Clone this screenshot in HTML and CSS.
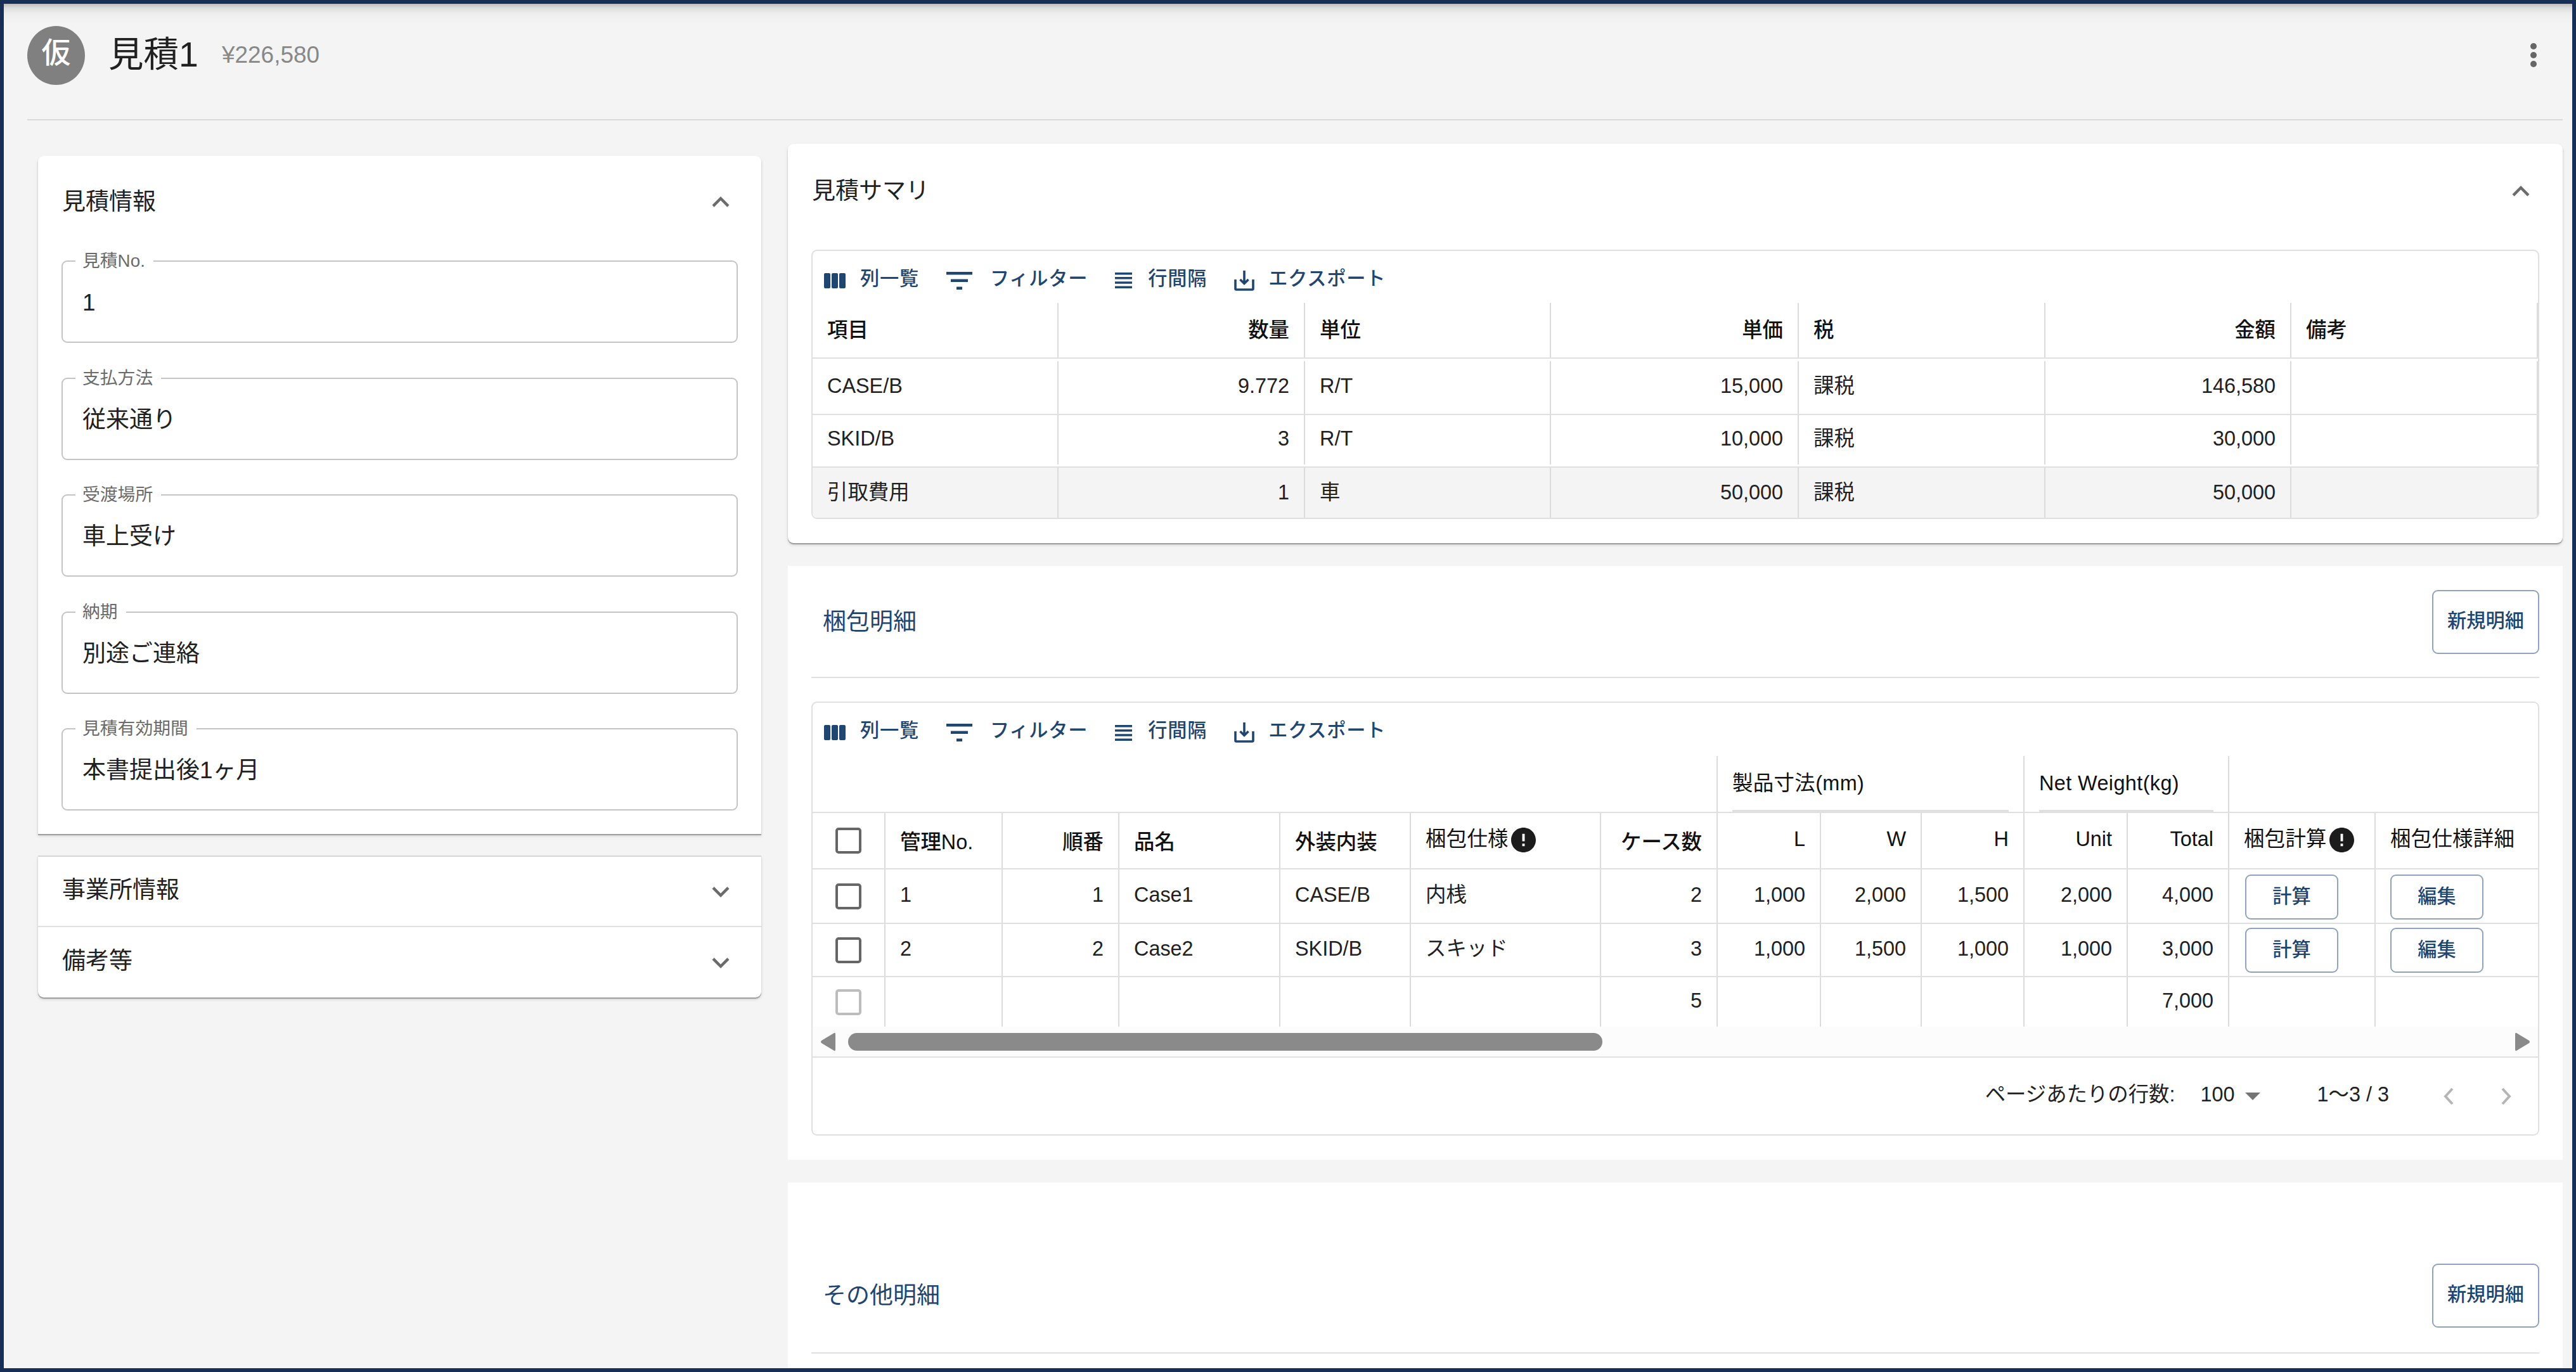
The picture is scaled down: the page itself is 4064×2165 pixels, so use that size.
FILE: index.html
```html
<!DOCTYPE html>
<html lang="ja">
<head>
    <meta charset="UTF-8">
    <meta name="viewport" content="width=device-width, initial-scale=1.0">
    <title>見積1</title>
    <link rel="stylesheet" href="styles.css">
</head>
<body>
    <!-- shared icons -->
    <svg class="defs" width="0" height="0">
        <symbol id="chevron" viewBox="0 0 24 24"><path d="M16.59 8.59 12 13.17 7.41 8.59 6 10l6 6 6-6z"/></symbol>
        <symbol id="columns" viewBox="0 0 34 24"><path d="M2 0h6a2 2 0 0 1 2 2v20a2 2 0 0 1-2 2H2a2 2 0 0 1-2-2V2a2 2 0 0 1 2-2zM14 0h6a2 2 0 0 1 2 2v20a2 2 0 0 1-2 2h-6a2 2 0 0 1-2-2V2a2 2 0 0 1 2-2zM26 0h6a2 2 0 0 1 2 2v20a2 2 0 0 1-2 2h-6a2 2 0 0 1-2-2V2a2 2 0 0 1 2-2z"/></symbol>
        <symbol id="filter" viewBox="0 0 41 28"><path d="M0 0h41v4.5H0zM7 11.5h27V16H7zM16 23.5h9V28h-9z"/></symbol>
        <symbol id="density" viewBox="0 0 27 25"><path d="M0 0h27v3.500H0zM0 7.100h27v3.500H0zM0 14.200h27v3.500H0zM0 21.500h27V25H0z"/></symbol>
        <symbol id="export" viewBox="0 0 32 32"><path d="M30 14v14.500a1.500 1.500 0 0 1-1.500 1.500h-25A1.500 1.500 0 0 1 2 28.500V14M16 0v20M9.500 14l6.500 6.500 6.500-6.500" fill="none" stroke="currentColor" stroke-width="3.600"/></symbol>
        <symbol id="info" viewBox="2 2 20 20"><path d="M12 2C6.480 2 2 6.480 2 12s4.480 10 10 10 10-4.480 10-10S17.520 2 12 2zm1 15h-2v-2h2v2zm0-4h-2V7h2v6z"/></symbol>
    </svg>

    <div class="page">
        <header class="header">
            <div class="avatar">仮</div>
            <h1>見積1</h1>
            <span class="price">¥226,580</span>
            <svg class="more" viewBox="0 0 12 38"><circle cx="6" cy="5" r="5"/><circle cx="6" cy="19" r="5"/><circle cx="6" cy="33" r="5"/></svg>
        </header>

        <div class="container">
            <aside class="sidebar">
                <section class="card info-card">
                    <div class="card-title"><span>見積情報</span><svg class="chevron up"><use href="#chevron"/></svg></div>
                    <div class="fields">
                        <div class="field"><label>見積No.</label><span>1</span></div>
                        <div class="field"><label>支払方法</label><span>従来通り</span></div>
                        <div class="field"><label>受渡場所</label><span>車上受け</span></div>
                        <div class="field"><label>納期</label><span>別途ご連絡</span></div>
                        <div class="field"><label>見積有効期間</label><span>本書提出後1ヶ月</span></div>
                    </div>
                </section>
                <section class="card folded">
                    <div class="fold"><span>事業所情報</span><svg class="chevron"><use href="#chevron"/></svg></div>
                    <div class="fold"><span>備考等</span><svg class="chevron"><use href="#chevron"/></svg></div>
                </section>
            </aside>

            <main class="main">
                <section class="card summary">
                    <div class="card-title"><span>見積サマリ</span><svg class="chevron up"><use href="#chevron"/></svg></div>
                    <div class="grid">
                        <div class="toolbar">
                            <a><svg class="i-columns"><use href="#columns"/></svg>列一覧</a>
                            <a><svg class="i-filter"><use href="#filter"/></svg>フィルター</a>
                            <a><svg class="i-density"><use href="#density"/></svg>行間隔</a>
                            <a><svg class="i-export"><use href="#export"/></svg>エクスポート</a>
                        </div>
                        <div class="row head"><div>項目</div><div class="num">数量</div><div>単位</div><div class="num">単価</div><div>税</div><div class="num">金額</div><div>備考</div></div>
                        <div class="row r1"><div>CASE/B</div><div class="num">9.772</div><div>R/T</div><div class="num">15,000</div><div>課税</div><div class="num">146,580</div><div></div></div>
                        <div class="row r2"><div>SKID/B</div><div class="num">3</div><div>R/T</div><div class="num">10,000</div><div>課税</div><div class="num">30,000</div><div></div></div>
                        <div class="row r3 hover"><div>引取費用</div><div class="num">1</div><div>車</div><div class="num">50,000</div><div>課税</div><div class="num">50,000</div><div></div></div>
                    </div>
                </section>

                <section class="panel packing">
                    <div class="panel-head"><h2>梱包明細</h2><button class="btn-new">新規明細</button></div>
                    <div class="grid">
                        <div class="toolbar">
                            <a><svg class="i-columns"><use href="#columns"/></svg>列一覧</a>
                            <a><svg class="i-filter"><use href="#filter"/></svg>フィルター</a>
                            <a><svg class="i-density"><use href="#density"/></svg>行間隔</a>
                            <a><svg class="i-export"><use href="#export"/></svg>エクスポート</a>
                        </div>
                        <div class="group-row">
                            <div></div>
                            <div><span class="group">製品寸法(mm)</span></div>
                            <div><span class="group">Net Weight(kg)</span></div>
                            <div></div>
                        </div>
                        <div class="row head">
                            <div class="check"><i></i></div><div class="low">管理No.</div><div class="num low">順番</div><div class="low">品名</div><div class="low">外装内装</div>
                            <div class="thin">梱包仕様<svg class="i-info"><use href="#info"/></svg></div><div class="num low">ケース数</div>
                            <div class="num">L</div><div class="num">W</div><div class="num">H</div><div class="num">Unit</div><div class="num">Total</div>
                            <div class="thin">梱包計算<svg class="i-info"><use href="#info"/></svg></div><div class="thin">梱包仕様詳細</div>
                        </div>
                        <div class="row r1">
                            <div class="check"><i></i></div><div>1</div><div class="num">1</div><div>Case1</div><div>CASE/B</div><div>内桟</div><div class="num">2</div>
                            <div class="num">1,000</div><div class="num">2,000</div><div class="num">1,500</div><div class="num">2,000</div><div class="num">4,000</div>
                            <div class="act"><button>計算</button></div><div class="act edit"><button>編集</button></div>
                        </div>
                        <div class="row r2">
                            <div class="check"><i></i></div><div>2</div><div class="num">2</div><div>Case2</div><div>SKID/B</div><div>スキッド</div><div class="num">3</div>
                            <div class="num">1,000</div><div class="num">1,500</div><div class="num">1,000</div><div class="num">1,000</div><div class="num">3,000</div>
                            <div class="act"><button>計算</button></div><div class="act edit"><button>編集</button></div>
                        </div>
                        <div class="row r3">
                            <div class="check disabled"><i></i></div><div></div><div></div><div></div><div></div><div></div><div class="num">5</div>
                            <div></div><div></div><div></div><div></div><div class="num">7,000</div><div></div><div></div>
                        </div>
                        <div class="scrollbar">
                            <svg viewBox="0 0 24 30"><path d="M21 1Q23 0 23 3v24q0 3-2 2L1 17q-2-2 0-4z"/></svg>
                            <div class="thumb"></div>
                            <svg viewBox="0 0 24 30"><path d="M3 1Q1 0 1 3v24q0 3 2 2l20-12q2-2 0-4z"/></svg>
                        </div>
                        <div class="pager">
                            <span class="per-page">ページあたりの行数:</span>
                            <span class="size">100</span>
                            <svg class="caret" viewBox="0 0 24 12"><path d="M0 0h24L12 12z"/></svg>
                            <span class="range">1〜3 / 3</span>
                            <svg class="nav" viewBox="0 0 16 28"><path d="M14 2 3 14l11 12"/></svg>
                            <svg class="nav next" viewBox="0 0 16 28"><path d="m2 2 11 12L2 26"/></svg>
                        </div>
                    </div>
                </section>

                <section class="panel others">
                    <div class="panel-head"><h2>その他明細</h2><button class="btn-new">新規明細</button></div>
                </section>
            </main>
        </div>
    </div>
</body>
</html>
```

FILE: styles.css
```css
:root {
    --navy: #1f4571;
    --frame: #172f57;
    --line: #e0e0e0;
    --text: #212121;
}

* {
    margin: 0;
    padding: 0;
    box-sizing: border-box;
}

body {
    width: 4064px;
    height: 2165px;
    overflow: hidden;
    font-family: "Liberation Sans", "Noto Sans CJK JP", sans-serif;
    font-size: 37px;
    color: var(--text);
}

svg {
    display: block;
    flex: none;
    fill: currentColor;
}

.defs {
    position: absolute;
}

.page {
    height: 2165px;
    border: 6px solid var(--frame);
    background: linear-gradient(#bdbdbd, #dedede 7px, #eeeeee 16px, #f4f4f4 32px);
    overflow: hidden;
}

/* header */
.header {
    display: flex;
    align-items: center;
    height: 184px;
    margin: 0 15px 0 37px;
    padding-bottom: 20px;
    border-bottom: 2px solid #d9d9d9;
}

.avatar {
    width: 91px;
    height: 93px;
    border-radius: 50%;
    background: #808080;
    color: #fff;
    font-size: 46px;
    font-weight: 500;
    line-height: 84px;
    text-align: center;
}

h1 {
    margin-left: 37px;
    font-size: 55.500px;
    font-weight: 400;
    line-height: 60px;
    padding-bottom: 3px;
}

.price {
    margin-left: 37px;
    color: #888;
}

.more {
    width: 12px;
    height: 38px;
    margin-left: auto;
    margin-right: 40px;
    color: #666;
}

.container {
    display: flex;
    align-items: flex-start;
    padding: 37px 15px 0 54px;
}

/* cards */
.card {
    background: #fff;
    border-radius: 9px;
    box-shadow: 0 2px 1px #9c9c9c, 0 3px 5px rgba(0, 0, 0, .14);
}

.card-title,
.fold {
    display: flex;
    justify-content: space-between;
    align-items: center;
    line-height: 50px;
}

.chevron {
    width: 54px;
    height: 54px;
    color: #6b6b6b;
}

.up {
    transform: rotate(180deg);
}

.sidebar {
    width: 1141px;
    margin: 19px 42px 0 0;
}

.info-card {
    height: 1070px;
    padding: 0 37px;
    border-radius: 9px 9px 0 0;
}

.info-card .card-title {
    height: 142px;
    padding: 4px 0 0 1px;
}

.fields {
    display: flex;
    flex-direction: column;
    gap: 54.500px;
    padding-top: 23px;
}

.field {
    position: relative;
    height: 130px;
    border: 2px solid #c4c4c4;
    border-radius: 9px;
    padding-left: 31px;
    line-height: 129px;
}

.field label {
    position: absolute;
    left: 20px;
    top: -20px;
    padding: 0 13px 0 11px;
    background: #fff;
    color: #6b6b6b;
    font-size: 27.800px;
    line-height: 38px;
}

.folded {
    margin-top: 34px;
    border-top: 2px solid #d6d6d6;
    border-radius: 0 0 9px 9px;
}

.fold {
    height: 109px;
    padding: 0 37px 0 38px;
}

.fold span {
    padding-bottom: 3px;
}

.fold + .fold {
    border-top: 2px solid var(--line);
    height: 113px;
}

.main {
    width: 2800px;
}

.summary {
    height: 630px;
    padding: 0 37px;
}

.summary .card-title {
    height: 148px;
    padding: 2px 2px 0 1px;
}

/* data grids */
.grid {
    border: 2px solid var(--line);
    border-radius: 9px;
    font-size: 32.400px;
    overflow: hidden;
}

.summary .grid {
    margin-top: 19px;
    height: 425px;
}

.toolbar {
    display: flex;
    gap: 43px;
    height: 82px;
    padding: 7px 0 0 18px;
    color: var(--navy);
    font-size: 30.200px;
    font-weight: 500;
    letter-spacing: .8px;
}

.toolbar a {
    display: flex;
    align-items: center;
    padding-bottom: 2px;
    line-height: 40px;
}

.toolbar svg {
    position: relative;
    top: 3px;
}

.i-columns {
    width: 34px;
    height: 24px;
    margin-right: 23px;
}

.i-filter {
    width: 41px;
    height: 28px;
    margin-right: 28px;
}

.i-density {
    width: 27px;
    height: 25px;
    margin-right: 25px;
}

.i-export {
    width: 32px;
    height: 32px;
    margin-right: 22px;
}

.row {
    display: grid;
    border-bottom: 2px solid var(--line);
}

.summary .row {
    grid-template-columns: 388px 389px 388px 391px 389px 388px 389px;
}

.row > div {
    display: flex;
    align-items: center;
    padding: 0 23px 4px;
    border-right: 2px solid #dcdcdc;
    white-space: nowrap;
    line-height: 40px;
}

.row > .num {
    justify-content: flex-end;
}

.head {
    height: 89px;
    font-weight: 500;
    color: #111;
}

.summary .head {
    height: 88px;
}

.summary .head > div {
    padding-bottom: 0;
}

.summary .r1 {
    height: 89px;
    padding-top: 4px;
}

.summary .r1 > div {
    padding-bottom: 6px;
}

.summary .r2 {
    height: 83px;
    padding-bottom: 3px;
}

.summary .r3 {
    height: 81px;
    border-bottom: 0;
}

.hover {
    background: #f4f4f4;
}

/* panels */
.panel {
    background: #fff;
    padding: 0 37px;
    margin-top: 36px;
}

.panel-head {
    display: flex;
    justify-content: space-between;
    align-items: flex-start;
    height: 177px;
    padding-top: 38px;
    border-bottom: 2px solid var(--line);
}

h2 {
    margin-left: 18px;
    color: var(--navy);
    font-size: 37px;
    font-weight: 400;
    line-height: 102px;
}

button {
    border: 2px solid #8fa3bc;
    border-radius: 9px;
    background: #fff;
    color: var(--navy);
    font: 500 30.200px "Liberation Sans", "Noto Sans CJK JP", sans-serif;
}

.btn-new {
    width: 169px;
    height: 101px;
    padding-bottom: 9px;
}

.packing {
    height: 937px;
}

.packing .grid {
    height: 685px;
    margin-top: 37px;
}

.packing .toolbar {
    height: 84px;
    padding-top: 6px;
}

.group-row {
    display: grid;
    grid-template-columns: 1428px 484px 323px 1fr;
    height: 90px;
    border-bottom: 2px solid var(--line);
    color: #111;
    letter-spacing: .4px;
}

.group-row > div {
    padding: 0 23px;
    border-right: 2px solid #dcdcdc;
}

.group-row > div:last-child {
    border-right: 0;
}

.group {
    display: block;
    height: 88px;
    line-height: 87px;
    border-bottom: 3px solid var(--line);
}

.packing .row {
    grid-template-columns: 115px 185px 184px 254px 206px 300px 184px 163px 159px 162px 163px 160px 231px 256px;
}

.packing .row > div:last-child {
    border-right: 0;
}

.packing .r1 {
    height: 86px;
}

.packing .r2 {
    height: 84px;
}

.packing .r3 {
    height: 78px;
    border-bottom: 0;
}

.packing .head > div {
    padding-bottom: 6px;
}

.packing .head > .low {
    padding-top: 4px;
    padding-bottom: 0;
}

.thin {
    font-weight: 400;
    letter-spacing: .3px;
}

.i-info {
    width: 39px;
    height: 39px;
    margin: 3px 0 0 4px;
    color: #1c1c1c;
}

.row > .check,
.packing .head > .check {
    justify-content: center;
    padding: 0;
}

.check i {
    width: 41px;
    height: 41px;
    border: 4px solid #666;
    border-radius: 5px;
}

.disabled i {
    border-color: #bdbdbd;
}

.row > .act {
    padding: 0 0 0 25px;
}

.r1 > .act {
    padding-top: 3px;
}

.row > .edit {
    padding-left: 23px;
}

.act button {
    width: 147px;
    height: 71px;
    padding-bottom: 7px;
}

.scrollbar {
    display: flex;
    align-items: center;
    height: 49px;
    padding: 0 13px;
    border-bottom: 2px solid var(--line);
    background: #fcfcfc;
    color: #8a8a8a;
}

.scrollbar svg {
    width: 24px;
    height: 30px;
}

.thumb {
    width: 1190px;
    height: 28px;
    margin: 0 auto 0 19px;
    border-radius: 14px;
    background: #8a8a8a;
}

.pager {
    display: flex;
    align-items: center;
    justify-content: flex-end;
    height: 121px;
    padding-right: 42px;
    line-height: 40px;
}

.pager span {
    padding-bottom: 6px;
}

.size {
    margin-left: 40px;
}

.caret {
    width: 24px;
    height: 12px;
    margin: 0 90px 0 16px;
    color: #757575;
}

.nav {
    width: 16px;
    height: 28px;
    margin-left: 86px;
    fill: none;
    stroke: #b5b5b5;
    stroke-width: 4;
}

.next {
    margin-left: 75px;
}

.others {
    height: 310px;
}

.others .panel-head {
    height: 270px;
    padding-top: 128px;
}
```
